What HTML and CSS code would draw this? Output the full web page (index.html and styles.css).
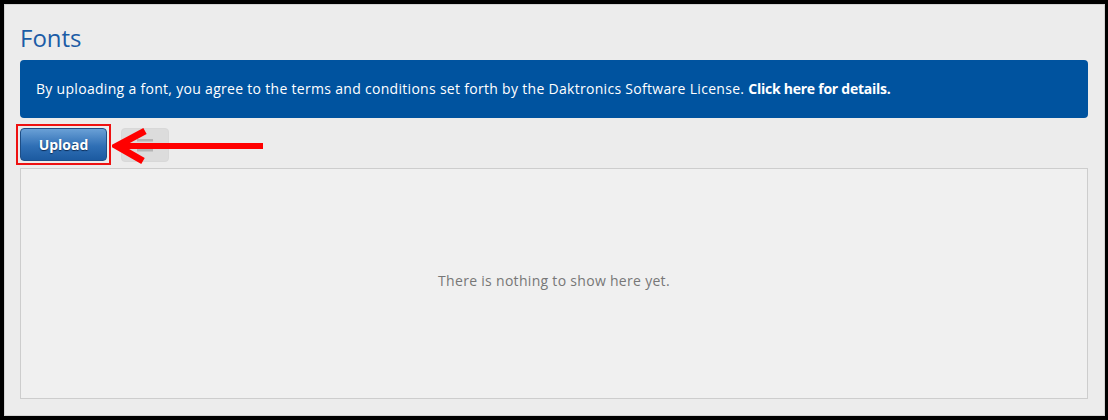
FILE: index.html
```html
<!DOCTYPE html>
<html>
<head>
<meta charset="utf-8">
<link rel="stylesheet" href="styles.css">
</head>
<body>
<div class="frame">
  <div class="panel">
    <h1 class="title">Fonts</h1>
    <div class="banner">By uploading a font, you agree to the terms and conditions set forth by the Daktronics Software License. <b>Click here for details.</b></div>
    <div class="toolbar">
      <span class="highlight"><button class="btn-upload">Upload</button></span>
      <button class="btn-gray" aria-label="List view">
        <svg width="16" height="14" viewBox="0 0 16 14"><rect x="0" y="1" width="16" height="2.5" fill="#b4b4b4"/><rect x="0" y="6" width="16" height="2.5" fill="#b4b4b4"/><rect x="0" y="11" width="16" height="2.5" fill="#b4b4b4"/></svg>
      </button>
      <svg class="arrow" width="160" height="40" viewBox="0 0 160 40">
        <line x1="8" y1="19" x2="151" y2="19" stroke="#f00" stroke-width="6"/>
        <polyline points="33,4 5,19 31,34" fill="none" stroke="#f00" stroke-width="7" stroke-linejoin="miter"/>
      </svg>
    </div>
    <div class="empty">
      <p class="empty-text">There is nothing to show here yet.</p>
    </div>
  </div>
</div>
</body>
</html>
```
FILE: styles.css
```css
html, body {
  margin: 0;
  padding: 0;
  background: #000;
}
.frame {
  width: 1108px;
  height: 420px;
  box-sizing: border-box;
  padding: 4px 3px 4px 4px;
  background: #000;
}
.panel {
  height: 100%;
  box-sizing: border-box;
  border: 1px solid #d4d4d4;
  background: #ececec;
  padding: 19px 16px 16px 15px;
  display: flex;
  flex-direction: column;
  font-family: "Open Sans", "DejaVu Sans", sans-serif;
}
.title {
  margin: 0 0 8px 0;
  font-size: 24px;
  line-height: 28px;
  font-weight: 400;
  color: #1b5ca6;
  letter-spacing: 0;
}
.banner {
  background: #00539f;
  color: #fff;
  border-radius: 4px;
  padding: 21px 16px;
  font-size: 14px;
  line-height: 16px;
  letter-spacing: 0.3px;
}
.banner b {
  font-weight: 700;
  letter-spacing: -0.25px;
}
.toolbar {
  position: relative;
  display: flex;
  align-items: flex-start;
  gap: 10px;
  margin-top: 6px;
  height: 44px;
}
.highlight {
  display: block;
  border: 2px solid #ee1111;
  padding: 2px;
  margin-left: -4px;
}
.btn-upload {
  display: block;
  width: 87px;
  height: 33px;
  border: 1px solid #1e4e86;
  border-radius: 4px;
  background: linear-gradient(#6aa0d6, #2f6fb5 55%, #1c5aa0);
  color: #fff;
  font-family: "Open Sans", "DejaVu Sans", sans-serif;
  font-size: 14px;
  font-weight: 700;
  text-shadow: 0 1px 1px #0d2c55;
  padding: 0;
}
.btn-gray {
  width: 48px;
  height: 34px;
  margin-top: 4px;
  border: 1px solid #d8d8d8;
  border-radius: 4px;
  background: #dcdcdc;
  padding: 0;
  display: flex;
  align-items: center;
  justify-content: center;
}
.arrow {
  position: absolute;
  left: 92px;
  top: 3px;
}
.empty {
  flex: 1;
  border: 1px solid #cdcdcd;
  background: #f0f0f0;
  display: flex;
  align-items: center;
  justify-content: center;
  padding-bottom: 7px;
}
.empty-text {
  margin: 0;
  color: #777;
  font-size: 14px;
  letter-spacing: 0.3px;
}
```
